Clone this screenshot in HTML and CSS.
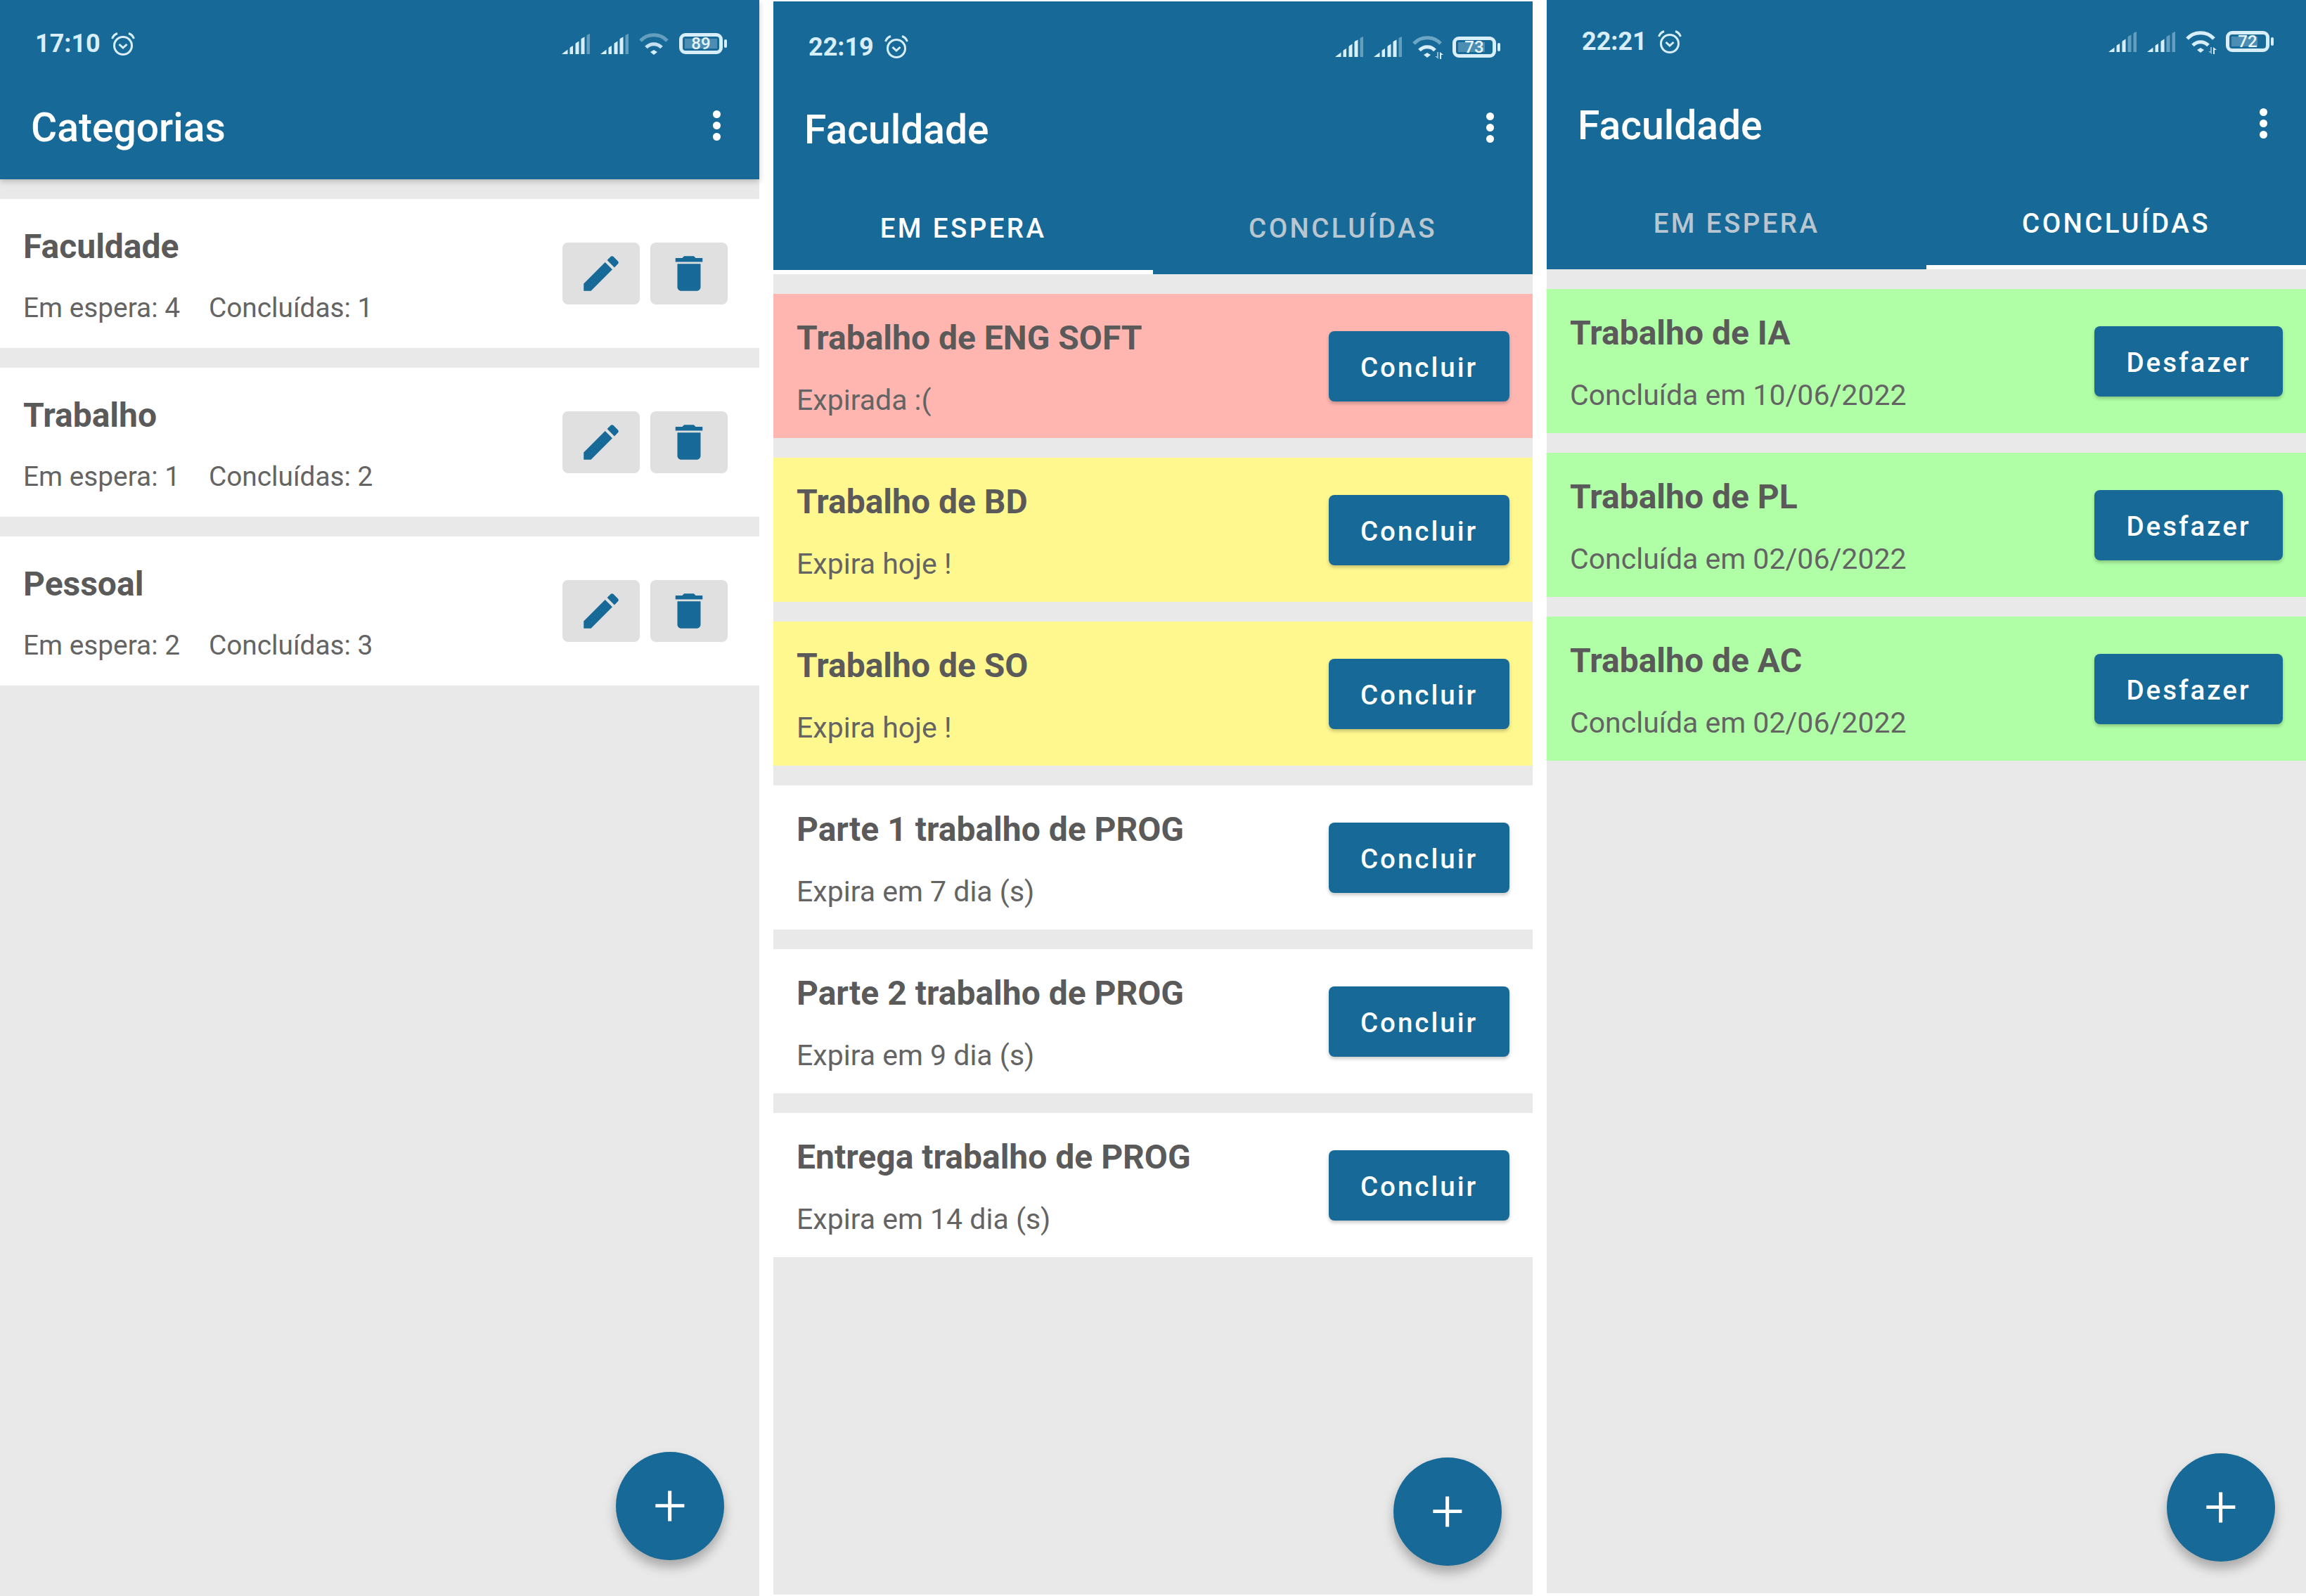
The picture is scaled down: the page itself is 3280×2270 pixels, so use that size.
FILE: index.html
```html
<!DOCTYPE html>
<html lang="pt-BR">
<head>
    <meta charset="UTF-8">
    <title>Categorias e tarefas</title>
    <link rel="stylesheet" href="styles.css">
</head>
<body>

    <svg class="defs" width="0" height="0">
        <symbol id="alarm" viewBox="0 0 34 33">
            <circle cx="17" cy="19" r="12.5" fill="none" stroke="currentColor" stroke-width="3"/>
            <path d="M11.500 17l5.500 5 5.500-5" fill="none" stroke="currentColor" stroke-width="3"/>
            <path d="M1.500 9C3 5 6 2.500 9 1.500M32.500 9C31 5 28 2.500 25 1.500" fill="none" stroke="currentColor" stroke-width="3"/>
        </symbol>
        <symbol id="arrows" viewBox="0 0 12 10">
            <path d="M3 0h2v10L0 6h3z" fill="currentColor" opacity=".6"/>
            <path d="M7 0l5 4H9v6H7z" fill="currentColor"/>
        </symbol>
        <symbol id="pencil" viewBox="0 0 24 24">
            <path d="M3 17.250V21h3.750L17.810 9.940l-3.750-3.750L3 17.250zM20.710 7.040c.39-.39.39-1.020 0-1.410l-2.340-2.340c-.39-.39-1.020-.39-1.410 0l-1.830 1.830 3.750 3.750 1.830-1.830z" fill="currentColor"/>
        </symbol>
        <symbol id="trash" viewBox="0 0 24 24">
            <path d="M6 19c0 1.100.9 2 2 2h8c1.100 0 2-.9 2-2V7H6v12zM19 4h-3.500l-1-1h-5l-1 1H5v2h14V4z" fill="currentColor"/>
        </symbol>
    </svg>

    <div class="screens">

        <!-- Categorias -->
        <section class="screen">
            <header class="appbar appbar-plain">
                <div class="status status-a">
                    <span class="clock">17:10</span>
                    <svg class="alarm"><use href="#alarm"/></svg>
                    <div class="status-icons">
                        <svg class="signal" viewBox="0 0 40 29"><path d="M0 29l8.500-6.500V29zM11.500 20.500q0-1 1-1.500l3.500-2V29h-4.500zM19.500 14.500q0-1 1-1.500l4-2.500V29h-5zM27.500 8q0-1 1-1.500l4-2V29h-5z" fill="currentColor"/><path d="M35.500 3q0-1 1-1.500L40 0v29h-4.500z" fill="currentColor" opacity=".4"/></svg>
                        <svg class="signal" viewBox="0 0 40 29"><path d="M0 29l8.500-6.500V29zM11.500 20.500q0-1 1-1.500l3.500-2V29h-4.500zM19.500 14.500q0-1 1-1.500l4-2.500V29h-5zM27.500 8q0-1 1-1.500l4-2V29h-5z" fill="currentColor"/><path d="M35.500 3q0-1 1-1.500L40 0v29h-4.500z" fill="currentColor" opacity=".4"/></svg>
                        <svg class="wifi" viewBox="0 0 42 31">
                            <path d="M2 11C12 0 30 0 40 11" fill="none" stroke="currentColor" stroke-width="5" opacity=".4"/>
                            <path d="M10 20.500C16 14 26 14 32 20.500" fill="none" stroke="currentColor" stroke-width="5" opacity=".9"/>
                            <path d="M16 27l5-3 5 3-5 4z" fill="currentColor"/>
                        </svg>
                        <div class="battery"><span class="battery-fill" style="width: 89%"></span><span class="battery-num">89</span></div>
                    </div>
                </div>
                <div class="toolbar">
                    <h1>Categorias</h1>
                    <div class="dots"><i></i><i></i><i></i></div>
                </div>
            </header>
            <div class="list">
                <div class="card category">
                    <div class="card-text">
                        <h2>Faculdade</h2>
                        <p><span class="count">Em espera: 4</span><span>Concluídas: 1</span></p>
                    </div>
                    <button class="icon-btn"><svg class="pencil"><use href="#pencil"/></svg></button>
                    <button class="icon-btn"><svg class="trash"><use href="#trash"/></svg></button>
                </div>
                <div class="card category">
                    <div class="card-text">
                        <h2>Trabalho</h2>
                        <p><span class="count">Em espera: 1</span><span>Concluídas: 2</span></p>
                    </div>
                    <button class="icon-btn"><svg class="pencil"><use href="#pencil"/></svg></button>
                    <button class="icon-btn"><svg class="trash"><use href="#trash"/></svg></button>
                </div>
                <div class="card category">
                    <div class="card-text">
                        <h2>Pessoal</h2>
                        <p><span class="count">Em espera: 2</span><span>Concluídas: 3</span></p>
                    </div>
                    <button class="icon-btn"><svg class="pencil"><use href="#pencil"/></svg></button>
                    <button class="icon-btn"><svg class="trash"><use href="#trash"/></svg></button>
                </div>
            </div>
            <button class="fab fab-a">+</button>
        </section>

        <!-- Em espera -->
        <section class="screen screen-b">
            <header class="appbar">
                <div class="status status-b">
                    <span class="clock">22:19</span>
                    <svg class="alarm"><use href="#alarm"/></svg>
                    <div class="status-icons">
                        <svg class="signal" viewBox="0 0 40 29"><path d="M0 29l8.500-6.500V29zM11.500 20.500q0-1 1-1.500l3.500-2V29h-4.500zM19.500 14.500q0-1 1-1.500l4-2.500V29h-5zM27.500 8q0-1 1-1.500l4-2V29h-5z" fill="currentColor"/><path d="M35.500 3q0-1 1-1.500L40 0v29h-4.500z" fill="currentColor" opacity=".4"/></svg>
                        <svg class="signal" viewBox="0 0 40 29"><path d="M0 29l8.500-6.500V29zM11.500 20.500q0-1 1-1.500l3.500-2V29h-4.500zM19.500 14.500q0-1 1-1.500l4-2.500V29h-5zM27.500 8q0-1 1-1.500l4-2V29h-5z" fill="currentColor"/><path d="M35.500 3q0-1 1-1.500L40 0v29h-4.500z" fill="currentColor" opacity=".4"/></svg>
                        <div class="wifi-wrap">
                            <svg class="wifi" viewBox="0 0 42 31">
                                <path d="M2 11C12 0 30 0 40 11" fill="none" stroke="currentColor" stroke-width="5" opacity=".45"/>
                                <path d="M10 20.500C16 14 26 14 32 20.500" fill="none" stroke="currentColor" stroke-width="5"/>
                                <path d="M16 27l5-3 5 3-5 4z" fill="currentColor"/>
                            </svg>
                            <svg class="arrows"><use href="#arrows"/></svg>
                        </div>
                        <div class="battery"><span class="battery-fill" style="width: 73%"></span><span class="battery-num">73</span></div>
                    </div>
                </div>
                <div class="toolbar toolbar-b">
                    <h1>Faculdade</h1>
                    <div class="dots"><i></i><i></i><i></i></div>
                </div>
                <div class="tabs">
                    <div class="tab tab-on">EM ESPERA</div>
                    <div class="tab">CONCLUÍDAS</div>
                </div>
            </header>
            <div class="list">
                <div class="card task late">
                    <div class="card-text">
                        <h2>Trabalho de ENG SOFT</h2>
                        <p>Expirada :(</p>
                    </div>
                    <button class="action">Concluir</button>
                </div>
                <div class="card task today">
                    <div class="card-text">
                        <h2>Trabalho de BD</h2>
                        <p>Expira hoje !</p>
                    </div>
                    <button class="action">Concluir</button>
                </div>
                <div class="card task today">
                    <div class="card-text">
                        <h2>Trabalho de SO</h2>
                        <p>Expira hoje !</p>
                    </div>
                    <button class="action">Concluir</button>
                </div>
                <div class="card task">
                    <div class="card-text">
                        <h2>Parte 1 trabalho de PROG</h2>
                        <p>Expira em 7 dia (s)</p>
                    </div>
                    <button class="action">Concluir</button>
                </div>
                <div class="card task">
                    <div class="card-text">
                        <h2>Parte 2 trabalho de PROG</h2>
                        <p>Expira em 9 dia (s)</p>
                    </div>
                    <button class="action">Concluir</button>
                </div>
                <div class="card task">
                    <div class="card-text">
                        <h2>Entrega trabalho de PROG</h2>
                        <p>Expira em 14 dia (s)</p>
                    </div>
                    <button class="action">Concluir</button>
                </div>
            </div>
            <button class="fab fab-b">+</button>
        </section>

        <!-- Concluídas -->
        <section class="screen screen-c">
            <header class="appbar">
                <div class="status status-c">
                    <span class="clock">22:21</span>
                    <svg class="alarm"><use href="#alarm"/></svg>
                    <div class="status-icons">
                        <svg class="signal" viewBox="0 0 40 29"><path d="M0 29l8.500-6.500V29zM11.500 20.500q0-1 1-1.500l3.500-2V29h-4.500zM19.500 14.500q0-1 1-1.500l4-2.500V29h-5z" fill="currentColor"/><path d="M27.500 8q0-1 1-1.500l4-2V29h-5zM35.500 3q0-1 1-1.500L40 0v29h-4.500z" fill="currentColor" opacity=".4"/></svg>
                        <svg class="signal" viewBox="0 0 40 29"><path d="M0 29l8.500-6.500V29zM11.500 20.500q0-1 1-1.500l3.500-2V29h-4.500zM19.500 14.500q0-1 1-1.500l4-2.500V29h-5z" fill="currentColor"/><path d="M27.500 8q0-1 1-1.500l4-2V29h-5zM35.500 3q0-1 1-1.500L40 0v29h-4.500z" fill="currentColor" opacity=".4"/></svg>
                        <div class="wifi-wrap">
                            <svg class="wifi" viewBox="0 0 42 31">
                                <path d="M2 11C12 0 30 0 40 11" fill="none" stroke="currentColor" stroke-width="5"/>
                                <path d="M10 20.500C16 14 26 14 32 20.500" fill="none" stroke="currentColor" stroke-width="5"/>
                                <path d="M16 27l5-3 5 3-5 4z" fill="currentColor"/>
                            </svg>
                            <svg class="arrows"><use href="#arrows"/></svg>
                        </div>
                        <div class="battery"><span class="battery-fill" style="width: 72%"></span><span class="battery-num">72</span></div>
                    </div>
                </div>
                <div class="toolbar toolbar-c">
                    <h1>Faculdade</h1>
                    <div class="dots"><i></i><i></i><i></i></div>
                </div>
                <div class="tabs">
                    <div class="tab">EM ESPERA</div>
                    <div class="tab tab-on">CONCLUÍDAS</div>
                </div>
            </header>
            <div class="list">
                <div class="card task done">
                    <div class="card-text">
                        <h2>Trabalho de IA</h2>
                        <p>Concluída em 10/06/2022</p>
                    </div>
                    <button class="action action-wide">Desfazer</button>
                </div>
                <div class="card task done">
                    <div class="card-text">
                        <h2>Trabalho de PL</h2>
                        <p>Concluída em 02/06/2022</p>
                    </div>
                    <button class="action action-wide">Desfazer</button>
                </div>
                <div class="card task done">
                    <div class="card-text">
                        <h2>Trabalho de AC</h2>
                        <p>Concluída em 02/06/2022</p>
                    </div>
                    <button class="action action-wide">Desfazer</button>
                </div>
            </div>
            <button class="fab fab-c">+</button>
        </section>

    </div>

</body>
</html>
```

FILE: styles.css
```css
* {
    box-sizing: border-box;
}
html, body {
    margin: 0;
    height: 100%;
    background-color: #fff;
}
body {
    font-family: Roboto, "Liberation Sans", sans-serif;
    color: #5a5a5a;
}
.defs {
    position: absolute;
}
h1, h2, p {
    margin: 0;
}
button {
    font-family: inherit;
    border: none;
    padding: 0;
}

.screens {
    display: flex;
    gap: 20px;
    height: 2270px;
}
.screen {
    position: relative;
    width: 1080px;
    height: 2270px;
    background-color: #e9e9e9;
    display: flex;
    flex-direction: column;
}
.screen-b {
    margin-top: 2px;
    height: 2266px;
}
.screen-c {
    height: 2266px;
}

/* barra superior */
.appbar {
    background-color: #176a97;
    color: #fff;
}
.appbar-plain {
    height: 255px;
    box-shadow: 0 3px 8px rgba(0, 0, 0, 0.22);
}
.status {
    display: flex;
    align-items: center;
    padding: 0 45px 0 50px;
    color: #d8eefb;
}
.status-a {
    height: 124px;
}
.status-b {
    height: 129px;
}
.status-c {
    height: 118px;
}
.clock {
    font-size: 36px;
    font-weight: 700;
}
.alarm {
    width: 34px;
    height: 33px;
    margin-left: 15px;
}
.status-icons {
    display: flex;
    align-items: center;
    gap: 15px;
    margin-left: auto;
}
.signal {
    width: 40px;
    height: 29px;
}
.wifi {
    display: block;
    width: 42px;
    height: 31px;
}
.wifi-wrap {
    position: relative;
}
.arrows {
    position: absolute;
    right: -2px;
    bottom: -2px;
    width: 12px;
    height: 10px;
}
.battery {
    position: relative;
    width: 62px;
    height: 30px;
    margin-right: 7px;
    border: 5px solid currentColor;
    border-radius: 9px;
    display: flex;
    align-items: center;
    justify-content: center;
}
.battery::after {
    content: "";
    position: absolute;
    right: -11px;
    top: 4px;
    width: 4px;
    height: 12px;
    border-radius: 2px;
    background-color: currentColor;
}
.battery-fill {
    position: absolute;
    left: 3px;
    top: 3px;
    bottom: 3px;
    background-color: rgba(216, 238, 251, 0.28);
}
.battery-num {
    position: relative;
    font-size: 24px;
    font-weight: 500;
    line-height: 1;
    color: #e8f5fc;
}
.toolbar {
    height: 108px;
    display: flex;
    align-items: center;
    justify-content: space-between;
    padding: 0 55px 0 44px;
}
.toolbar h1 {
    font-size: 57px;
    font-weight: 500;
    margin-top: 6px;
}
.toolbar-b {
    height: 100px;
    margin-bottom: 33px;
}
.toolbar-c {
    height: 114px;
    margin-bottom: 25px;
}
.dots {
    display: flex;
    flex-direction: column;
    gap: 5px;
}
.dots i {
    width: 11px;
    height: 11px;
    border-radius: 50%;
    background-color: #fff;
}
.tabs {
    display: flex;
}
.tab {
    flex: 1;
    height: 126px;
    padding-bottom: 6px;
    display: flex;
    align-items: center;
    justify-content: center;
    font-size: 38.500px;
    font-weight: 500;
    letter-spacing: 3.400px;
    color: #b9c6cf;
}
.tab-on {
    color: #fff;
    border-bottom: 6px solid #fff;
    padding-bottom: 0;
}

/* listas */
.list {
    display: flex;
    flex-direction: column;
    padding-top: 28px;
    gap: 28px;
}
.card {
    display: flex;
    align-items: center;
    background-color: #fff;
    padding: 0 33px;
}
.card-text {
    flex: 1;
}
.card h2 {
    font-size: 48px;
    font-weight: 700;
    line-height: 60px;
}
.card p {
    font-size: 41px;
    line-height: 50px;
    margin-top: 33px;
    color: #646464;
}
.category {
    height: 212px;
    padding-right: 45px;
    gap: 15px;
}
.category .card-text {
    margin-top: 6px;
}
.category p {
    font-size: 38.800px;
    margin-top: 32px;
}
.count {
    margin-right: 41px;
}
.icon-btn {
    width: 110px;
    height: 88px;
    border-radius: 8px;
    background-color: #e0e0e0;
    color: #176a97;
    display: flex;
    align-items: center;
    justify-content: center;
}
.pencil, .trash {
    width: 66px;
    height: 66px;
}
.task {
    height: 205px;
}
.task .card-text {
    margin-top: 4px;
}
.late {
    background-color: #ffb6b0;
}
.today {
    background-color: #fff88f;
}
.done {
    background-color: #b0ffa6;
}
.action {
    width: 257px;
    height: 100px;
    padding-top: 3px;
    border-radius: 8px;
    background-color: #176a97;
    color: #fff;
    font-size: 38.500px;
    font-weight: 500;
    letter-spacing: 3px;
    box-shadow: 0 3px 5px rgba(0, 0, 0, 0.22);
}
.action-wide {
    width: 268px;
}

/* botão flutuante */
.fab {
    position: absolute;
    width: 154px;
    height: 154px;
    border-radius: 50%;
    background-color: #176a97;
    color: #fff;
    font-size: 84px;
    font-weight: 300;
    line-height: 1;
    box-shadow: 0 10px 16px rgba(0, 0, 0, 0.28);
}
.fab-a {
    right: 50px;
    top: 2065px;
}
.fab-b {
    right: 44px;
    top: 2071px;
}
.fab-c {
    right: 44px;
    top: 2067px;
}
```
